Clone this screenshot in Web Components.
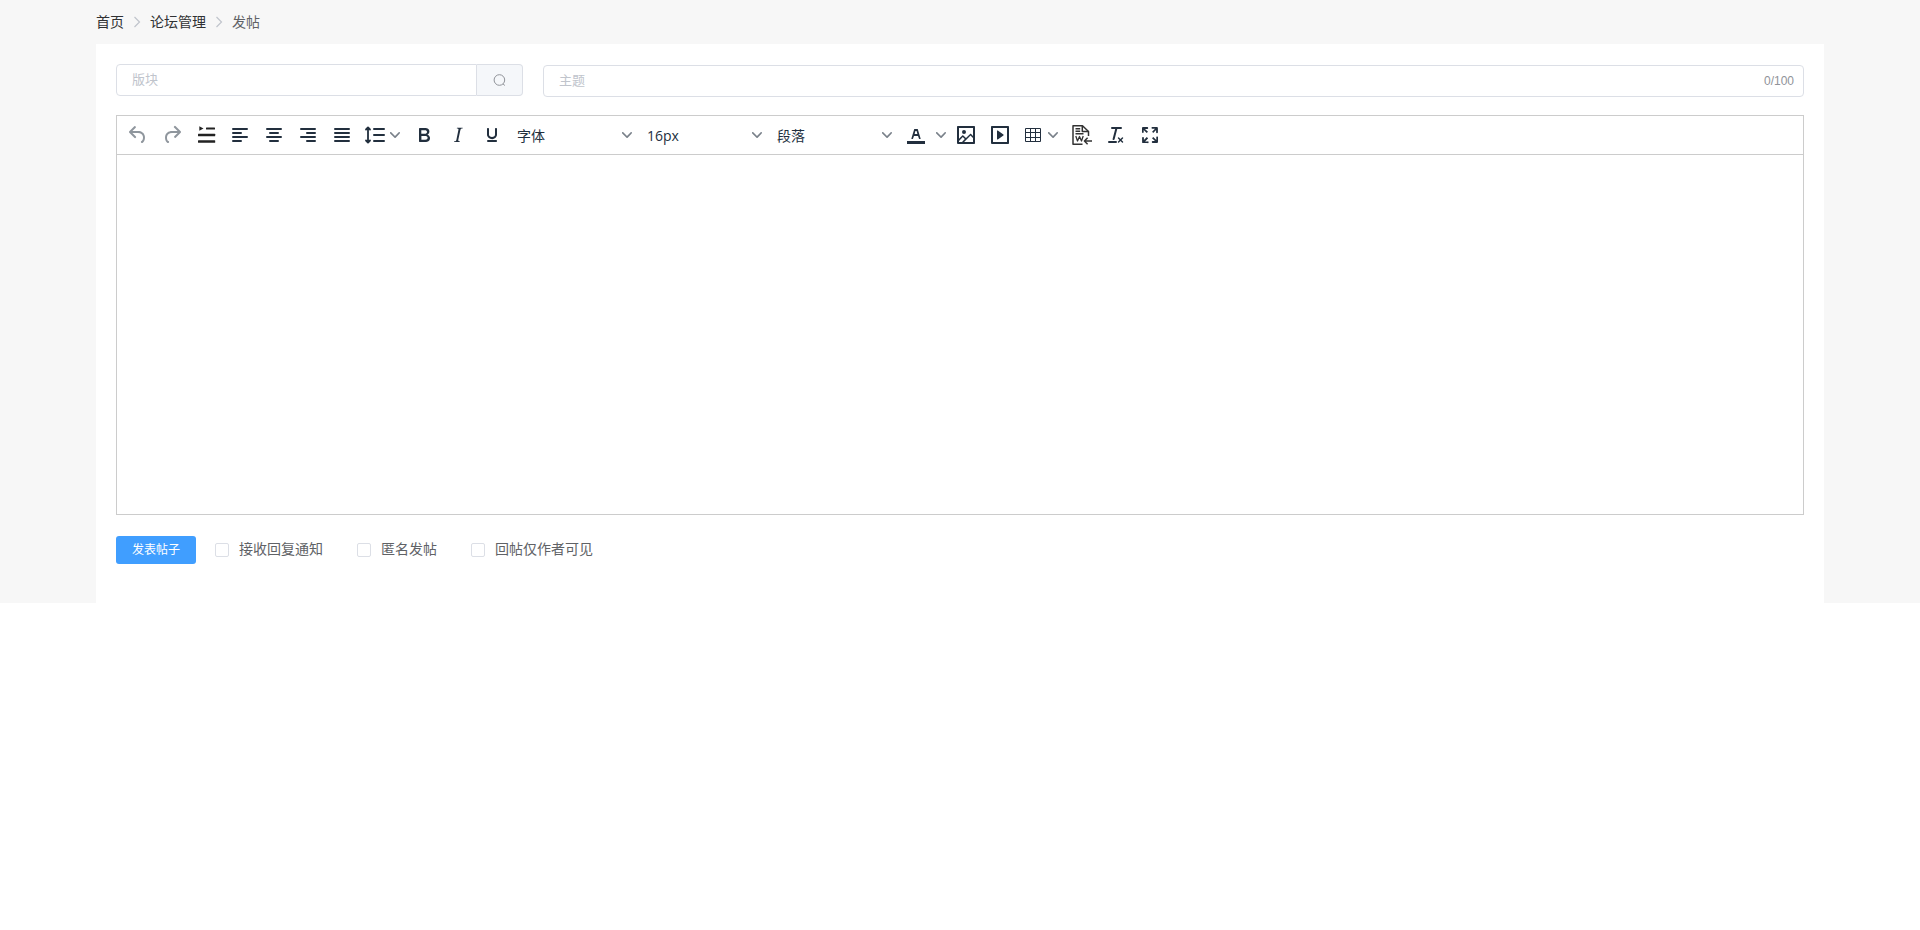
<!DOCTYPE html>
<html lang="zh-CN">
<head>
<meta charset="utf-8">
<title>发帖</title>
<style>
  body { margin: 0; background: #fff; color: #606266; font: 14px/20px "Open Sans", "Noto Sans CJK SC", sans-serif; }
</style>
</head>
<body>
<forum-page>
  <bread-crumb slot="nav">
    <crumb-item href="#home">首页</crumb-item>
    <crumb-item href="#forum">论坛管理</crumb-item>
    <crumb-item current>发帖</crumb-item>
  </bread-crumb>
  <post-form></post-form>
</forum-page>

<template id="t-page">
  <style>
    :host { display: block; background: #f7f7f7; padding: 0 5%; }
    header { height: 44px; display: flex; align-items: center; }
    main { background: #fff; padding: 20px 20px 39px; }
  </style>
  <header><slot name="nav"></slot></header>
  <main><slot></slot></main>
</template>

<template id="t-crumbs">
  <style>
    :host { display: block; }
    nav { display: flex; align-items: center; }
  </style>
  <nav aria-label="导航"><slot></slot></nav>
</template>

<template id="t-form">
  <style>
    :host { display: block; }
    form { margin: 0; }
    .fields { display: flex; gap: 20px; align-items: flex-start; margin-bottom: 18px; }
    board-picker { flex: 0 0 calc(25% - 15px); }
    topic-input { flex: 1; margin-top: 1px; }
    .actions { display: flex; align-items: center; margin-top: 21px; }
    .submit { height: 28px; padding: 0 16px; margin-right: 19px; border: 0; border-radius: 3px; background: #409eff; color: #fff; font: inherit; font-size: 12px; line-height: 12px; }
    .checks { display: flex; gap: 34px; }
  </style>
  <form onsubmit="return false">
    <div class="fields">
      <board-picker></board-picker>
      <topic-input></topic-input>
    </div>
    <rich-editor></rich-editor>
    <div class="actions">
      <button class="submit" type="submit">发表帖子</button>
      <div class="checks">
        <check-box>接收回复通知</check-box>
        <check-box>匿名发帖</check-box>
        <check-box>回帖仅作者可见</check-box>
      </div>
    </div>
  </form>
</template>

<template id="t-board">
  <style>
    :host { display: flex; height: 32px; }
    input { flex: 1; min-width: 0; box-sizing: border-box; padding: 0 15px 2px; border: 1px solid #dcdfe6; border-radius: 4px 0 0 4px; background: #fff; color: #606266; font: inherit; font-size: 13px; outline: 0; }
    input::placeholder { color: #c0c4cc; }
    button { width: 46px; padding: 0; border: 1px solid #dcdfe6; border-left: 0; border-radius: 0 4px 4px 0; background: #f5f7fa; color: #909399; display: flex; align-items: center; justify-content: center; }
    svg { display: block; }
  </style>
  <input type="text" placeholder="版块" aria-label="版块">
  <button type="button" aria-label="搜索版块">
    <svg width="14" height="14" viewBox="0 0 14 14" fill="none" stroke="currentColor"><circle cx="6.400" cy="7" r="5.300"/><path d="M10 10.900l1.900 1.600"/></svg>
  </button>
</template>

<template id="t-topic">
  <style>
    :host { display: flex; align-items: center; box-sizing: border-box; height: 32px; padding: 0 9px 0 15px; border: 1px solid #dcdfe6; border-radius: 4px; background: #fff; }
    input { flex: 1; min-width: 0; box-sizing: border-box; height: 30px; padding: 0 0 2px; border: 0; background: none; color: #606266; font: inherit; font-size: 13px; outline: 0; }
    input::placeholder { color: #c0c4cc; }
    output { font: 12px/20px "Liberation Sans", sans-serif; color: #909399; }
  </style>
  <input id="topic" type="text" maxlength="100" placeholder="主题" aria-label="主题">
  <output for="topic">0/100</output>
</template>

<template id="t-check">
  <style>
    :host { display: block; }
    label { display: flex; align-items: center; gap: 10px; }
    input { appearance: none; box-sizing: border-box; width: 14px; height: 14px; margin: 0; border: 1px solid #dcdfe6; border-radius: 2px; background: #fff; }
    input:checked { background: #409eff; border-color: #409eff; }
    span { padding-bottom: 2px; }
  </style>
  <label><input type="checkbox"><span><slot></slot></span></label>
</template>

<template id="t-editor">
  <style>
    :host { display: flex; flex-direction: column; box-sizing: border-box; min-height: 400px; border: 1px solid #ccc; background: #fff; }
    .bar { display: flex; flex-wrap: wrap; padding: 0 4px; border-bottom: 1px solid #ccc; }
    textarea { flex: 1; min-height: 200px; padding: 16px; border: 0; resize: none; outline: 0; background: none; font: inherit; font-size: 16px; }
  </style>
  <div class="bar" role="toolbar" aria-label="编辑工具">
    <tool-button icon="undo" label="撤销" disabled></tool-button>
    <tool-button icon="redo" label="重做" disabled></tool-button>
    <tool-button icon="indent" label="首行缩进"></tool-button>
    <tool-button icon="left" label="左对齐"></tool-button>
    <tool-button icon="center" label="居中对齐"></tool-button>
    <tool-button icon="right" label="右对齐"></tool-button>
    <tool-button icon="justify" label="两端对齐"></tool-button>
    <tool-button icon="leading" label="行高" menu></tool-button>
    <tool-button icon="bold" label="粗体"></tool-button>
    <tool-button icon="italic" label="斜体"></tool-button>
    <tool-button icon="underline" label="下划线"></tool-button>
    <tool-select label="选择字体" value="字体"></tool-select>
    <tool-select label="选择字号" value="16px"></tool-select>
    <tool-select label="选择格式" value="段落"></tool-select>
    <tool-button icon="color" label="文字颜色" split></tool-button>
    <tool-button icon="image" label="图片"></tool-button>
    <tool-button icon="media" label="媒体"></tool-button>
    <tool-button icon="table" label="表格" menu></tool-button>
    <tool-button icon="word" label="导入文档"></tool-button>
    <tool-button icon="clear" label="清除格式"></tool-button>
    <tool-button icon="full" label="全屏"></tool-button>
  </div>
  <textarea aria-label="正文"></textarea>
</template>

<script>
const ICONS = {
  undo: '<path d="M6.4 8H12c3.7 0 6.2 2 6.8 5.1.6 2.7-.4 5.6-2.3 6.8a1 1 0 0 1-1-1.8c1.1-.6 1.8-2.7 1.4-4.6-.5-2.1-2.1-3.5-4.9-3.5H6.4l3.3 3.3a1 1 0 1 1-1.4 1.4l-5-5a1 1 0 0 1 0-1.4l5-5a1 1 0 0 1 1.4 1.4L6.4 8z"/>',
  redo: '<path d="M17.6 10H12c-2.8 0-4.4 1.4-4.9 3.5-.4 2 .3 4 1.4 4.6a1 1 0 1 1-1 1.8c-2-1.2-2.9-4.1-2.3-6.8.6-3 3-5.1 6.8-5.1h5.6l-3.3-3.3a1 1 0 1 1 1.4-1.4l5 5a1 1 0 0 1 0 1.4l-5 5a1 1 0 0 1-1.4-1.4l3.3-3.3z"/>',
  indent: '<g fill="#222"><path d="M5.300 3.200L9.500 5.500 5.300 7.800z"/><rect x="12" y="4.400" width="9" height="2" rx=".5"/><rect x="4" y="10.800" width="17.200" height="2.400" rx=".5"/><rect x="4" y="17.300" width="17.200" height="2.500" rx=".5"/></g>',
  left: '<path d="M5 6h14M5 10h8M5 14h14M5 18h8" stroke="currentColor" stroke-width="2" stroke-linecap="round"/>',
  center: '<path d="M5 6h14M8 10h8M5 14h14M8 18h8" stroke="currentColor" stroke-width="2" stroke-linecap="round"/>',
  right: '<path d="M5 6h14M11 10h8M5 14h14M11 18h8" stroke="currentColor" stroke-width="2" stroke-linecap="round"/>',
  justify: '<path d="M5 6h14M5 10h14M5 14h14M5 18h14" stroke="currentColor" stroke-width="2" stroke-linecap="round"/>',
  leading: '<path d="M11 6h10M11 12h10M11 18h10" stroke="currentColor" stroke-width="2" stroke-linecap="round"/><path d="M5 5v14M3 6.500l2-2 2 2M3 17.500l2 2 2-2" fill="none" stroke="currentColor" stroke-width="1.800" stroke-linecap="round" stroke-linejoin="round"/>',
  bold: '<path d="M7.8 19c-.3 0-.5 0-.6-.2l-.2-.5V5.7c0-.2 0-.4.2-.5l.6-.2h5c1.5 0 2.7.3 3.5 1 .7.6 1.1 1.4 1.1 2.5a3 3 0 0 1-.6 1.9c-.4.6-1 1-1.6 1.200.4.1.9.3 1.300.6s.8.7 1 1.200c.4.4.5 1 .5 1.600 0 1.300-.4 2.300-1.300 3-.8.7-2.100 1-3.800 1H7.800zm5-8.300c.6 0 1.200-.1 1.600-.5.4-.3.6-.7.6-1.300 0-1.100-.8-1.700-2.300-1.700H9.300v3.500h3.400zm.5 6c.7 0 1.300-.1 1.700-.4.4-.4.6-.9.6-1.500s-.2-1-.7-1.400c-.4-.3-1-.4-2-.4H9.400v3.800h4z"/>',
  italic: '<path d="M16.700 4.700l-.1.9h-.3c-.6 0-1 0-1.400.3-.3.3-.4.6-.5 1.100l-2.100 9.800v.6c0 .5.4.8 1.400.8h.2l-.2.8H8l.2-.8h.2c1.100 0 1.800-.5 2-1.500l2-9.800.1-.5c0-.6-.4-.8-1.400-.8h-.3l.2-.9h5.700z"/>',
  underline: '<path d="M16 5c.6 0 1 .4 1 1v5.500a4 4 0 0 1-.4 1.800l-1 1.400a5.300 5.300 0 0 1-5.500 1 5 5 0 0 1-1.600-1c-.5-.4-.8-.9-1.100-1.400a4 4 0 0 1-.4-1.800V6c0-.6.4-1 1-1s1 .4 1 1v5.500c0 .3 0 .6.2 1l.6.7a3.300 3.300 0 0 0 2.200.8 3.400 3.400 0 0 0 2.200-.8c.3-.2.4-.5.6-.8l.2-.9V6c0-.6.4-1 1-1zM8 17h8c.6 0 1 .4 1 1s-.4 1-1 1H8a1 1 0 0 1 0-2z"/>',
  color: '<path d="M3 18h18v3H3zM8.700 16h-.8a.5.5 0 0 1-.5-.6l2.700-9c.1-.3.3-.4.5-.4h2.800c.2 0 .4.1.5.4l2.700 9a.5.5 0 0 1-.5.6h-.8a.5.5 0 0 1-.4-.4l-.7-2.200c0-.3-.3-.4-.5-.4h-3.400c-.2 0-.4.1-.5.4l-.7 2.200c0 .3-.2.4-.4.4zm2.600-7.600l-.6 2a.5.5 0 0 0 .5.6h1.600a.5.5 0 0 0 .5-.6l-.6-2c0-.3-.3-.4-.5-.4h-.4c-.2 0-.4.1-.5.4z"/>',
  image: '<path d="M5 15.700l3.300-3.200c.3-.3.7-.3 1 0L12 15l4.100-4c.3-.4.8-.4 1 0l1.900 1.900V5H5v10.700zM5 18v1h3l2.800-2.900-2-2L5 17.900zm14-3l-2.500-2.400-6.400 6.400H19v-4zM4 3h16c.6 0 1 .4 1 1v16c0 .6-.4 1-1 1H4a1 1 0 0 1-1-1V4c0-.6.4-1 1-1zm6 8a2 2 0 1 0 0-4 2 2 0 0 0 0 4z"/>',
  media: '<path d="M4 3h16c.6 0 1 .4 1 1v16c0 .6-.4 1-1 1H4a1 1 0 0 1-1-1V4c0-.6.4-1 1-1zm1 2v14h14V5H5zm4.800 2.600l5.600 4a.5.5 0 0 1 0 .8l-5.600 4A.5.5 0 0 1 9 16V8a.5.5 0 0 1 .8-.4z"/>',
  table: '<path d="M4.500 5.500h15v13h-15zM9.500 5.500v13M14.500 5.500v13M4.500 9.500h15M4.500 14.500h15" fill="none" stroke="currentColor"/>',
  word: '<g fill="none" stroke="#333" stroke-width="1.500" stroke-linejoin="round"><path d="M18.500 13V8.500l-6-5.700H3v18.500h9.500"/><path d="M12.300 3v5.500h6"/><path d="M5.500 5.800h4.700M5.500 8.300h4.700M5.500 10.800h8M22 18h-7.300M17.600 14.800L14.400 18l3.200 3.200"/><path d="M5.800 13l1.700 5 2-4.500 2 4.500 1.700-5" stroke-width="1.300"/></g>',
  clear: '<path d="M13.200 6a1 1 0 0 1 0 .2l-2.600 10a1 1 0 0 1-1 .8h-.2a.8.8 0 0 1-.8-1l2.600-10H8a1 1 0 1 1 0-2h9a1 1 0 0 1 0 2h-3.800zM5 18h7a1 1 0 0 1 0 2H5a1 1 0 0 1 0-2zm13 1.500L16.500 18 15 19.500a.7.7 0 0 1-1-1l1.500-1.500-1.500-1.500a.7.7 0 0 1 1-1l1.500 1.500 1.500-1.500a.7.7 0 0 1 1 1L17.500 17l1.500 1.500a.7.7 0 0 1-1 1z"/>',
  full: '<path d="M15.300 10l-1.200-1.300 2.900-3h-2.300a.9.9 0 1 1 0-1.700H19c.5 0 .9.4.9.9v4.400a.9.9 0 1 1-1.800 0V7l-2.900 3zm0 4l3 3v-2.300a.9.9 0 1 1 1.700 0V19c0 .5-.4.9-.9.9h-4.400a.9.9 0 1 1 0-1.800H17l-3-2.900 1.300-1.200zM10 15.400l-2.900 3h2.300a.9.9 0 1 1 0 1.700H5a.9.9 0 0 1-.9-.9v-4.400a.9.9 0 1 1 1.800 0V17l2.900-3 1.200 1.300zM8.700 10L5.700 7v2.300a.9.9 0 0 1-1.700 0V5c0-.5.4-.9.9-.9h4.400a.9.9 0 0 1 0 1.800H7l3 2.900-1.300 1.200z"/>'
};
const CHEVRON = '<svg class="chev" width="10" height="10" viewBox="0 0 10 10" aria-hidden="true"><path d="M8.700 2.200c.3-.3.8-.3 1 0 .4.4.4.9 0 1.200L5.700 7.800c-.3.3-.9.3-1.200 0L.2 3.400a.8.8 0 0 1 0-1.200c.3-.3.8-.3 1.100 0L5 6l3.700-3.800z"/></svg>';

const define = (name, template) => customElements.define(name, class extends HTMLElement {
  constructor() {
    super();
    this.attachShadow({ mode: 'open' }).append(document.getElementById(template).content.cloneNode(true));
  }
});

customElements.define('crumb-item', class extends HTMLElement {
  connectedCallback() {
    const current = this.hasAttribute('current');
    this.attachShadow({ mode: 'open' }).innerHTML = `
      <style>
        :host { display: flex; align-items: center; }
        a { color: #303133; text-decoration: none; }
        svg { display: block; margin: 0 6px; }
      </style>` + (current
        ? '<span aria-current="page"><slot></slot></span>'
        : `<a href="${this.getAttribute('href')}"><slot></slot></a>
      <svg width="14" height="14" viewBox="0 0 14 14" fill="none" stroke="#c0c4cc" stroke-width="1.200" aria-hidden="true"><path d="M4.500 2l5 5-5 5"/></svg>`);
  }
});

customElements.define('tool-button', class extends HTMLElement {
  connectedCallback() {
    const label = this.getAttribute('label');
    const icon = `<svg width="24" height="24" viewBox="0 0 24 24" fill-rule="evenodd" aria-hidden="true">${ICONS[this.getAttribute('icon')]}</svg>`;
    const menu = this.hasAttribute('menu');
    this.attachShadow({ mode: 'open' }).innerHTML = `
      <style>
        :host { display: flex; height: 34px; margin: 2px 0; color: #222f3e; }
        button { display: flex; align-items: center; justify-content: center; box-sizing: border-box; width: 34px; padding: 0; border: 0; background: none; color: inherit; }
        button:disabled { opacity: .5; }
        .menu { width: 48px; gap: 3px; padding: 0 4px; justify-content: flex-start; }
        .more { width: 16px; }
        svg { display: block; flex: none; fill: currentColor; }
        .chev { opacity: .6; }
      </style>
      <button type="button" aria-label="${label}" class="${menu ? 'menu' : ''}" ${this.hasAttribute('disabled') ? 'disabled' : ''}>${icon}${menu ? CHEVRON : ''}</button>
      ${this.hasAttribute('split') ? `<button type="button" class="more" aria-label="${label}选项">${CHEVRON}</button>` : ''}`;
  }
});

customElements.define('tool-select', class extends HTMLElement {
  connectedCallback() {
    this.attachShadow({ mode: 'open' }).innerHTML = `
      <style>
        :host { display: grid; align-items: center; width: 130px; height: 34px; margin: 2px 0; color: #222f3e; }
        select, svg { grid-area: 1 / 1; }
        select { appearance: none; box-sizing: border-box; width: 100%; height: 34px; padding: 2px 24px 0 8px; border: 0; outline: 0; background: none; color: inherit; font: inherit; }
        svg { justify-self: end; margin-right: 7px; fill: currentColor; opacity: .6; pointer-events: none; }
      </style>
      <select aria-label="${this.getAttribute('label')}"><option>${this.getAttribute('value')}</option></select>${CHEVRON}`;
  }
});

define('check-box', 't-check');
define('board-picker', 't-board');
define('topic-input', 't-topic');
define('rich-editor', 't-editor');
define('post-form', 't-form');
define('bread-crumb', 't-crumbs');
define('forum-page', 't-page');
</script>
</body>
</html>
